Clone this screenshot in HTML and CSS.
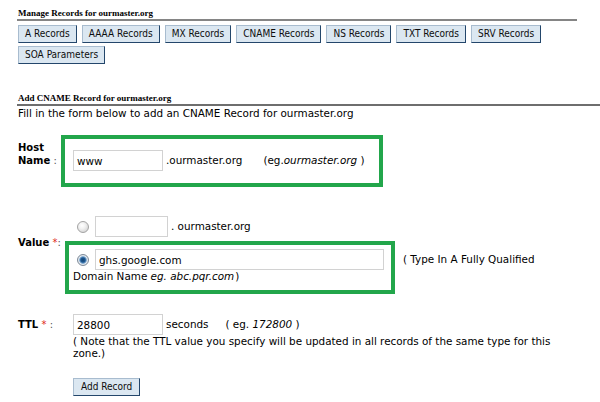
FILE: index.html
```html
<!DOCTYPE html>
<html>
<head>
<meta charset="utf-8">
<title>Add CNAME Record</title>
<link rel="stylesheet" href="styles.css">
</head>
<body>
<div class="page">
  <section class="manage">
    <h2 class="sec-title">Manage Records for ourmaster.org</h2>
    <div class="tabs">
      <button class="btn">A Records</button>
      <button class="btn">AAAA Records</button>
      <button class="btn">MX Records</button>
      <button class="btn">CNAME Records</button>
      <button class="btn">NS Records</button>
      <button class="btn">TXT Records</button>
      <button class="btn">SRV Records</button>
      <button class="btn">SOA Parameters</button>
    </div>
  </section>

  <section class="add">
    <h2 class="sec-title sec-title-2">Add CNAME Record for ourmaster.org</h2>
    <p class="intro">Fill in the form below to add an CNAME Record for ourmaster.org</p>

    <div class="form">
      <div class="row row-host">
        <div class="label"><b>Host<br>Name</b> <span class="colon">:</span></div>
        <div class="field field-host">
          <input class="txt txt-short" type="text" value="www">
          <span class="suffix">.ourmaster.org</span>
          <span class="eg">(eg.<i>ourmaster.org</i> )</span>
        </div>
      </div>

      <div class="row row-value">
        <div class="label label-value"><b>Value</b> <span class="req">*</span><span class="colon">:</span></div>
        <div class="field">
          <div class="opt">
            <input class="radio" type="radio" name="v"><input class="txt txt-mini" type="text" value=""><span class="suffix">. ourmaster.org</span>
          </div>
          <div class="opt opt-2">
            <input class="radio" type="radio" name="v" checked><input class="txt txt-long" type="text" value="ghs.google.com"><span class="hint">( Type In A Fully Qualified Domain Name <i class="ex">eg. abc.pqr.com</i>)</span>
          </div>
        </div>
      </div>

      <div class="row row-ttl">
        <div class="label label-ttl"><b>TTL</b> <span class="req">*</span> <span class="colon">:</span></div>
        <div class="field">
          <div class="opt">
            <input class="txt txt-short" type="text" value="28800"><span class="suffix">seconds</span><span class="eg eg-ttl">( eg. <i>172800</i> )</span>
          </div>
          <div class="note">( Note that the TTL value you specify will be updated in all records of the same type for this zone.)</div>
        </div>
      </div>

      <div class="row row-submit">
        <div class="label"></div>
        <div class="field">
          <button class="btn btn-submit">Add Record</button>
        </div>
      </div>
    </div>
  </section>

  <div class="hl hl-host"></div>
  <div class="hl hl-value"></div>
</div>
</body>
</html>
```

FILE: styles.css
```css
* { box-sizing: border-box; }

body {
  margin: 0;
  background: #ffffff;
  color: #000000;
  font-family: "DejaVu Sans", Verdana, sans-serif;
  font-size: 10.4px;
  line-height: 13px;
}

.page {
  position: relative;
  padding-left: 17px;
}

.manage {
  width: 560px;
}

.sec-title {
  margin: 0;
  padding: 8px 0 0 1px;
  font-family: "Liberation Serif", "Times New Roman", serif;
  font-weight: bold;
  font-size: 9px;
  line-height: 11px;
  border-bottom: 2px solid #858585;
}

.sec-title-2 {
  margin-top: 29px;
  padding-top: 0;
  border-bottom: 2px solid #6e6e6e;
}

.tabs {
  display: flex;
  flex-wrap: wrap;
  gap: 3px 5px;
  margin-top: 4px;
  padding-left: 1px;
}

.btn {
  height: 18px;
  margin: 0;
  padding: 0 6px;
  font-family: "DejaVu Sans Condensed", "Liberation Sans", Tahoma, Arial, sans-serif;
  font-stretch: condensed;
  font-size: 10px;
  line-height: 16px;
  color: #0d0d0d;
  background: #dbe7f1;
  border: 1px solid;
  border-color: #a8bccf #23466b #23466b #a8bccf;
  border-radius: 0;
}

.intro {
  margin: 0;
  padding-left: 1px;
  padding-top: 1px;
}

.form {
  padding-left: 1px;
}

.row {
  display: grid;
  grid-template-columns: 55px 492px;
}

.label {
  font-size: 10px;
  line-height: 13px;
}

.label b {
  font-weight: bold;
}

.colon {
  color: #555555;
}

.req {
  color: #e0261b;
}

.row-host {
  margin-top: 21px;
}

.field-host {
  display: flex;
  align-items: center;
  padding-top: 9px;
}

.txt {
  height: 21px;
  margin: 0;
  padding: 0 3px;
  font-family: "DejaVu Sans", Verdana, sans-serif;
  font-size: 10.4px;
  color: #000000;
  background: #ffffff;
  border: 1px solid #d2d2d2;
  border-radius: 0;
  vertical-align: middle;
  outline: none;
}

.txt-short { width: 90px; }
.txt-mini { width: 73px; }
.txt-long { width: 289px; }

.suffix {
  margin-left: 3px;
}

.eg {
  margin-left: 21px;
}

.eg-ttl {
  margin-left: 17px;
}

.row-value {
  margin-top: 45px;
}

.label-value {
  padding-top: 20px;
}

.opt {
  line-height: 13px;
}

.opt-2 {
  margin-top: 12px;
}

.radio {
  appearance: none;
  -webkit-appearance: none;
  width: 12px;
  height: 12px;
  margin: 0 6px 0 4px;
  border: 1px solid #a3a3a3;
  border-radius: 50%;
  background: radial-gradient(circle at 40% 35%, #ffffff 0, #f2f2f2 35%, #c9c9c9 100%);
  vertical-align: middle;
}

.radio:checked {
  border-color: #7d8a98;
  background: radial-gradient(circle, #12416f 0, #1f5a93 2.2px, #7aa6cf 3.4px, #e6ebf0 4.2px, #c4ccd4 100%);
}

.hint {
  margin-left: 19px;
}

.ex {
  padding-right: 1px;
}

.row-ttl {
  margin-top: 31px;
}

.label-ttl {
  padding-top: 4px;
}

.note {
  line-height: 12px;
}

.row-submit {
  margin-top: 19px;
}

.btn-submit {
  padding: 0 7px;
}

.hl {
  position: absolute;
  border: 4px solid #22a64b;
  pointer-events: none;
}

.hl-host {
  left: 61px;
  top: 135px;
  width: 322px;
  height: 52px;
}

.hl-value {
  left: 65px;
  top: 241px;
  width: 330px;
  height: 53px;
}
```
